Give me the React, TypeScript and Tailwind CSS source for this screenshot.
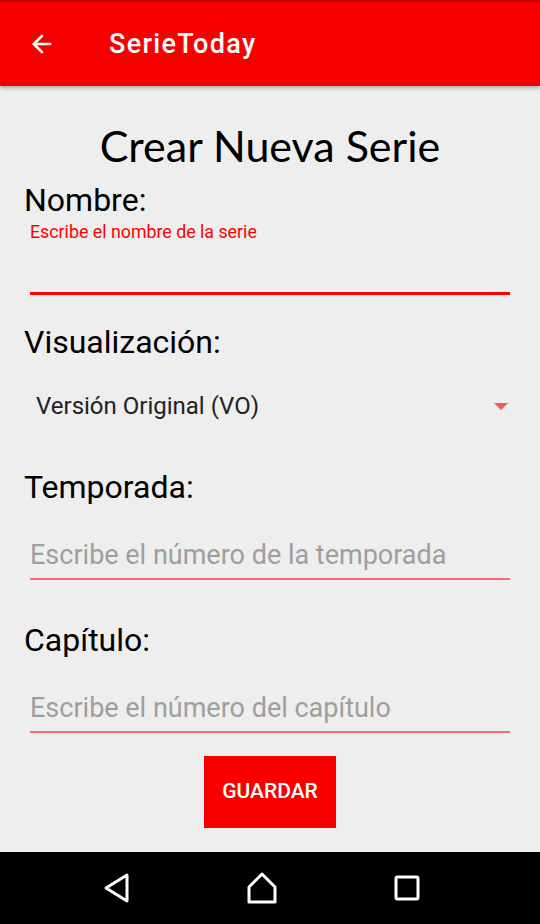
import { ArrowLeft } from "lucide-react";

const roboto = { fontFamily: "Roboto, 'Noto Sans', sans-serif" };

function Underline({ thick }: { thick?: boolean }) {
  return (
    <div
      className={
        thick ? "mx-[6px] h-[3px] bg-[#ff0000]" : "mx-[6px] h-[2px] bg-[#ff6b6b]"
      }
    />
  );
}

function NavBar() {
  return (
    <div className="flex h-[72px] items-center gap-[115px] bg-black pl-[101px]">
      <svg width="30" height="32" viewBox="0 0 30 32" fill="none">
        <path
          d="M26 3 L5 16 L26 29 Z"
          stroke="white"
          strokeWidth="3"
          strokeLinejoin="round"
        />
      </svg>
      <svg width="32" height="34" viewBox="0 0 32 34" fill="none">
        <path
          d="M3 31 V16 L16 3 L29 16 V31 Z"
          stroke="white"
          strokeWidth="3"
          strokeLinejoin="round"
        />
      </svg>
      <svg width="28" height="28" viewBox="0 0 28 28" fill="none">
        <rect
          x="3"
          y="3"
          width="22"
          height="22"
          rx="1.5"
          stroke="white"
          strokeWidth="3"
        />
      </svg>
    </div>
  );
}

export default function App() {
  return (
    <div className="flex h-[924px] w-[540px] flex-col bg-[#eeeeee]" style={roboto}>
      {/* App bar */}
      <div className="relative z-10 flex h-[86px] flex-col bg-[#f70000] shadow-[0_2px_4px_rgba(0,0,0,0.3)]">
        <div className="h-[2px] bg-[#c40000]" />
        <div className="flex flex-1 items-center">
          <ArrowLeft className="ml-[28px] text-white" size={28} strokeWidth={2.25} />
          <span className="ml-[53px] text-[27px] font-medium tracking-[1.3px] text-white">
            SerieToday
          </span>
        </div>
      </div>

      {/* Form */}
      <div className="flex flex-1 flex-col px-[24px]">
        <h1
          className="mt-[32px] text-center text-[43px] leading-[56px] text-black"
          style={{ fontFamily: "Lato, sans-serif" }}
        >
          Crear Nueva Serie
        </h1>

        <label className="mt-[8px] text-[32px] leading-[36px] text-black">Nombre:</label>
        <p className="ml-[6px] mt-[4px] text-[17.8px] leading-[20px] text-[#ff0000]">
          Escribe el nombre de la serie
        </p>
        <div className="h-[50px]" />
        <Underline thick />

        <label className="mt-[29px] text-[32px] leading-[36px] text-black">
          Visualización:
        </label>
        <div className="mt-[32px] flex h-[28px] items-center justify-between pl-[12px] pr-[8px]">
          <span className="text-[24px] leading-[28px] text-[#222222]">
            Versión Original (VO)
          </span>
          <span className="h-0 w-0 border-x-[7px] border-t-[7px] border-x-transparent border-t-[#f05a5a]" />
        </div>

        <label className="mt-[49px] text-[32px] leading-[36px] text-black">Temporada:</label>
        <p className="ml-[6px] mt-[34px] text-[27px] leading-[32px] text-[#9e9e9e]">
          Escribe el número de la temporada
        </p>
        <div className="mt-[7px]">
          <Underline />
        </div>

        <label className="mt-[42px] text-[32px] leading-[36px] text-black">Capítulo:</label>
        <p className="ml-[6px] mt-[34px] text-[27px] leading-[32px] text-[#9e9e9e]">
          Escribe el número del capítulo
        </p>
        <div className="mt-[7px]">
          <Underline />
        </div>

        <div className="mt-[23px] flex justify-center">
          <button className="h-[72px] w-[132px] bg-[#f70000] text-[21px] font-medium text-white">
            GUARDAR
          </button>
        </div>
      </div>

      <NavBar />
    </div>
  );
}
